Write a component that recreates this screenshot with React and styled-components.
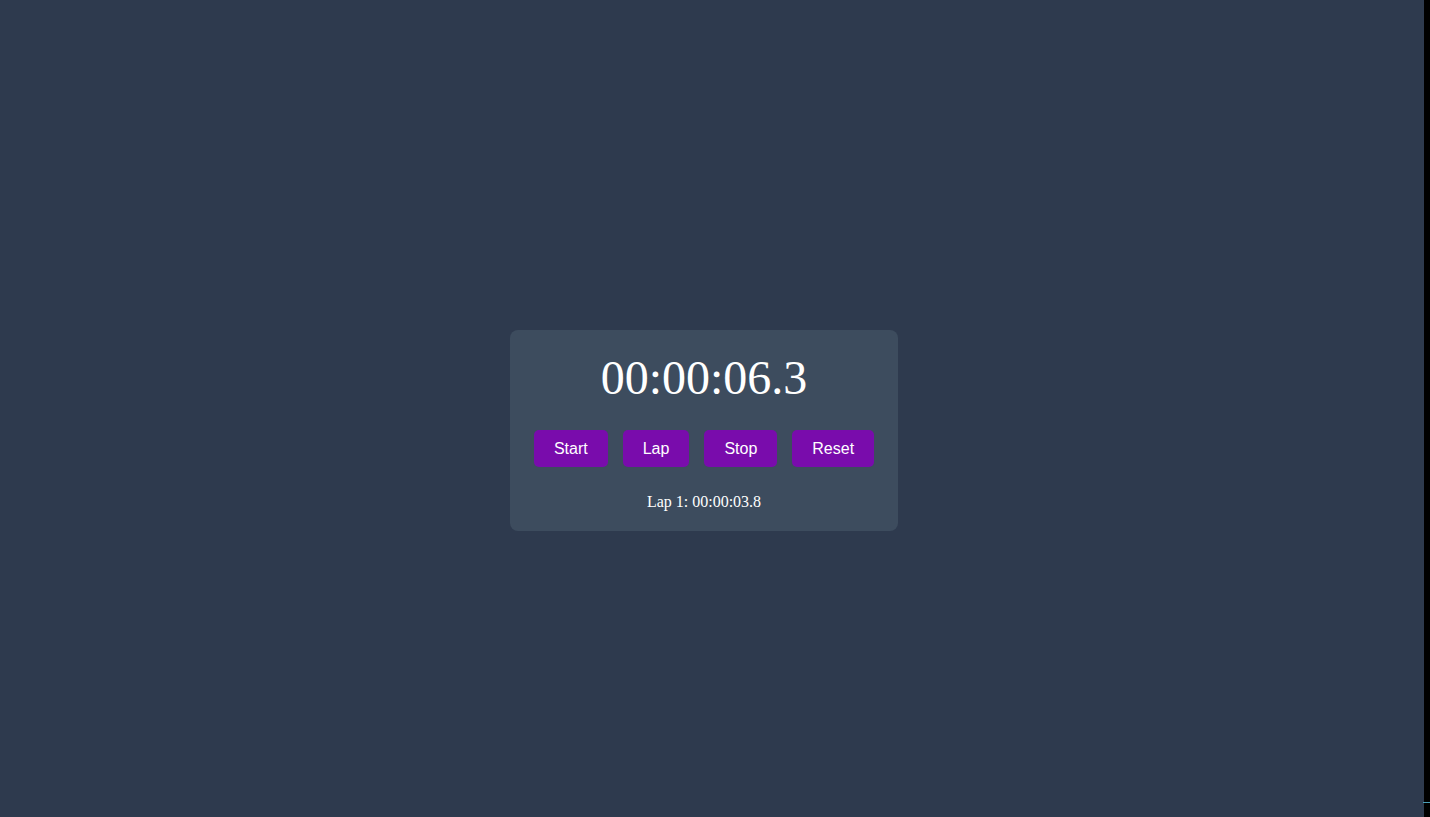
import React from "react";
import styled, { createGlobalStyle } from "styled-components";

const Global = createGlobalStyle`
  html, body { margin: 0; padding: 0; background: #000; }
  body { font-family: "Liberation Serif", "Times New Roman", serif; }
`;

const Page = styled.div`
  display: flex;
  width: 1430px;
  height: 817px;
  overflow: hidden;
`;

const Main = styled.main`
  flex: 1;
  display: flex;
  justify-content: center;
  align-items: flex-start;
  padding: 330px 16px 0 0;
  background: #2e3a4e;
`;

const Edge = styled.div`
  width: 6px;
  background: #000;
  display: flex;
  flex-direction: column;
  justify-content: flex-end;
  padding-bottom: 14px;
`;

const EdgeLine = styled.div`
  height: 1px;
  margin-left: -1px;
  background: #4a9fb8;
`;

const Card = styled.section`
  display: flex;
  flex-direction: column;
  align-items: center;
  padding: 20px 24px 20px;
  background: #3d4c5e;
  border-radius: 8px;
  color: #fff;
`;

const Time = styled.div`
  font-family: "Liberation Serif", "Times New Roman", serif;
  font-size: 48px;
  line-height: 55px;
  color: #fff;
`;

const Controls = styled.div`
  display: flex;
  gap: 15px;
  margin-top: 25px;
`;

const Button = styled.button`
  font-family: "Liberation Sans", Arial, sans-serif;
  font-size: 16px;
  line-height: 17px;
  padding: 10px 20px;
  border: none;
  border-radius: 5px;
  background: #790cac;
  color: #fff;
  cursor: pointer;
`;

const LapList = styled.ul`
  list-style: none;
  margin: 26px 0 0;
  padding: 0;
`;

const LapItem = styled.li`
  font-family: "Liberation Serif", "Times New Roman", serif;
  font-size: 16px;
  line-height: 18px;
  color: #fff;
  text-align: center;
`;

export default function App() {
  const laps = ["00:00:03.8"];
  return (
    <>
      <Global />
      <Page>
        <Main>
          <Card>
            <Time>00:00:06.3</Time>
            <Controls>
              <Button>Start</Button>
              <Button>Lap</Button>
              <Button>Stop</Button>
              <Button>Reset</Button>
            </Controls>
            <LapList>
              {laps.map((l, i) => (
                <LapItem key={i}>Lap {i + 1}: {l}</LapItem>
              ))}
            </LapList>
          </Card>
        </Main>
        <Edge>
          <EdgeLine />
        </Edge>
      </Page>
    </>
  );
}
